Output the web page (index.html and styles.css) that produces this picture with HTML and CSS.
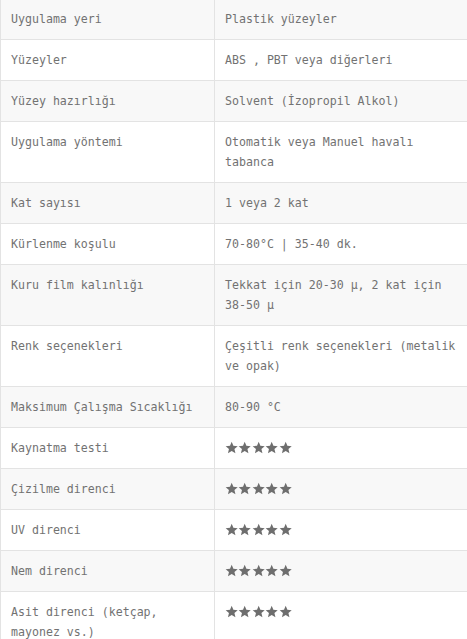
FILE: index.html
```html
<!DOCTYPE html>
<html lang="tr">
  <head>
    <meta charset="UTF-8" />
    <meta name="viewport" content="width=device-width, initial-scale=1.0" />
    <title>Teknik Özellikler</title>
    <link rel="stylesheet" href="styles.css">
  </head>
  <body>
    <table class="spec">
      <colgroup>
        <col class="spec_key" />
        <col />
      </colgroup>
      <tbody>
        <tr><td>Uygulama yeri</td><td>Plastik yüzeyler</td></tr>
        <tr><td>Yüzeyler</td><td>ABS , PBT veya diğerleri</td></tr>
        <tr><td>Yüzey hazırlığı</td><td>Solvent (İzopropil Alkol)</td></tr>
        <tr><td>Uygulama yöntemi</td><td>Otomatik veya Manuel havalı tabanca</td></tr>
        <tr><td>Kat sayısı</td><td>1 veya 2 kat</td></tr>
        <tr><td>Kürlenme koşulu</td><td>70-80°C | 35-40 dk.</td></tr>
        <tr><td>Kuru film kalınlığı</td><td>Tekkat için 20-30 µ, 2 kat için 38-50 µ</td></tr>
        <tr><td>Renk seçenekleri</td><td>Çeşitli renk seçenekleri (metalik ve opak)</td></tr>
        <tr><td>Maksimum Çalışma Sıcaklığı</td><td>80-90 °C</td></tr>
        <tr><td>Kaynatma testi</td><td><span class="stars" data-n="5"></span></td></tr>
        <tr><td>Çizilme direnci</td><td><span class="stars" data-n="5"></span></td></tr>
        <tr><td>UV direnci</td><td><span class="stars" data-n="5"></span></td></tr>
        <tr><td>Nem direnci</td><td><span class="stars" data-n="5"></span></td></tr>
        <tr><td>Asit direnci (ketçap, mayonez vs.)</td><td><span class="stars" data-n="5"></span></td></tr>
      </tbody>
    </table>
    <script>
      // yıldızları doldur
      const star =
        '<svg class="star" viewBox="0 0 24 24"><polygon points="12,1.5 15,8.6 22.8,9.2 16.9,14.3 18.7,22 12,17.9 5.3,22 7.1,14.3 1.2,9.2 9,8.6" /></svg>';
      document.querySelectorAll(".stars").forEach((el) => {
        let html = "";
        for (let i = 0; i < Number(el.dataset.n); i++) {
          html += star;
        }
        el.innerHTML = html;
      });
    </script>
  </body>
</html>
```

FILE: styles.css
```css
body {
  margin: 0;
  background: #fff;
  overflow: hidden;
}

.spec {
  width: 100%;
  margin-top: -2px;
  border-collapse: collapse;
  table-layout: fixed;
  font-family: "DejaVu Sans Mono", "Liberation Mono", monospace;
  font-size: 11.6px;
  line-height: 20px;
  color: #727272;
}

.spec_key {
  width: 214px;
}

.spec td {
  padding: 10px;
  border: 1px solid #e3e3e3;
  vertical-align: top;
  text-align: left;
}

.spec td:last-child {
  border-right: none;
}

.spec tr:nth-child(odd) td {
  background: #f8f8f8;
}

.stars {
  display: flex;
  align-items: center;
  height: 20px;
}

.star {
  width: 13.4px;
  height: 13.4px;
  fill: #6e6e6e;
}
```
